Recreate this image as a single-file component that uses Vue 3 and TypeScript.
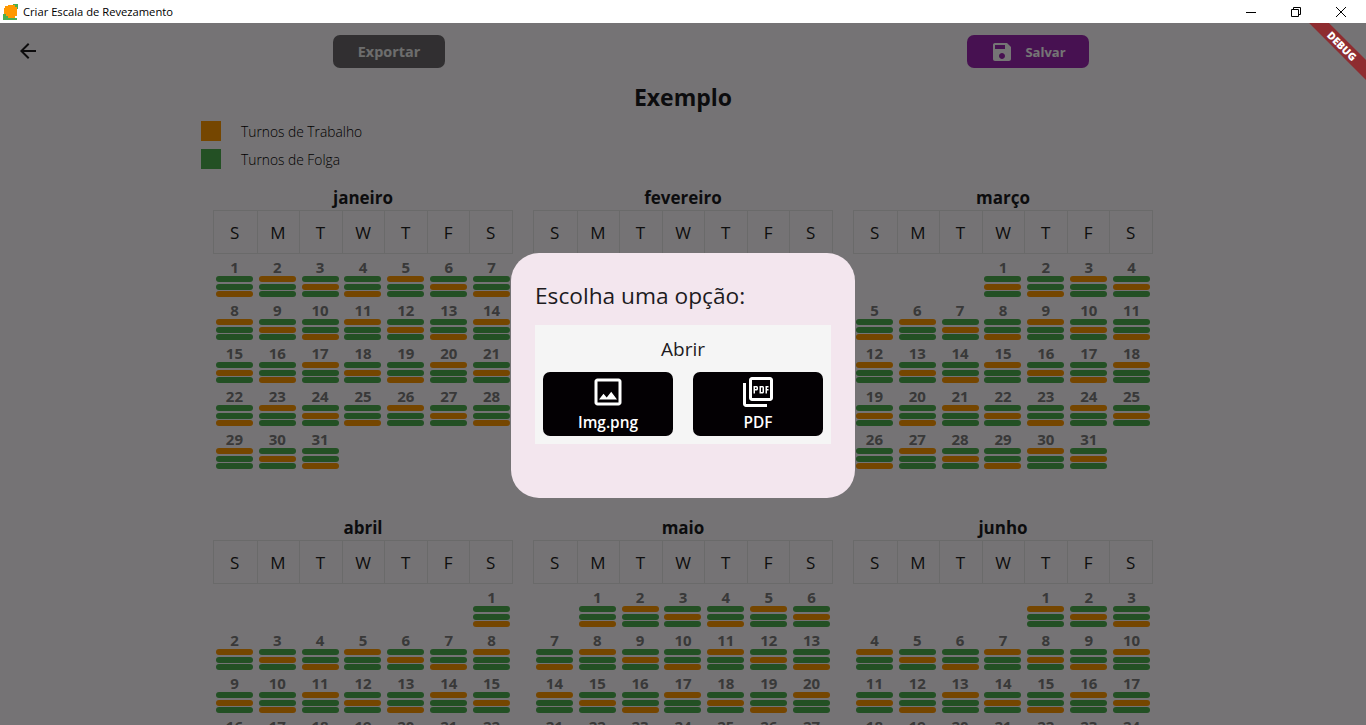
<script setup lang="ts">
interface Day {
  n: number
  shifts: string[]
}

interface Month {
  name: string
  blanks: number
  days: Day[]
}

const weekDays = ['S', 'M', 'T', 'W', 'T', 'F', 'S']
const monthNames = ['janeiro', 'fevereiro', 'março', 'abril', 'maio', 'junho']
const monthLengths = [31, 28, 31, 30, 31, 30]

// ciclo de 3 dias: folga, folga, trabalho
const cycle = [
  ['g', 'g', 'o'],
  ['o', 'g', 'g'],
  ['g', 'o', 'g'],
]

let count = 0
const months: Month[] = monthNames.map((name, m) => {
  const days: Day[] = []
  for (let d = 1; d <= monthLengths[m]; d++) {
    days.push({ n: d, shifts: cycle[count % 3] })
    count++
  }
  return { name, blanks: new Date(2023, m, 1).getDay(), days }
})
</script>

<template>
  <div class="window">
    <div class="titlebar">
      <svg class="app-icon" width="15" height="16" viewBox="0 0 15 16">
        <rect x="10" y="0" width="5" height="5" fill="#4caf50" />
        <rect x="0" y="10" width="5" height="6" fill="#4caf50" />
        <rect x="5" y="14" width="9" height="2" fill="#4caf50" />
        <path d="M2 2h3V1h7v2h2v9h-2v2H5v-2H3v-2H1V4h1z" fill="#ff9800" />
      </svg>
      <span class="app-title">Criar Escala de Revezamento</span>
      <div class="win-controls">
        <svg width="10" height="10" viewBox="0 0 10 10"><path d="M0 5.5h10" stroke="#000" fill="none" /></svg>
        <svg width="10" height="10" viewBox="0 0 10 10"><path d="M.5 2.5h7v7h-7zM2.5 2.5v-2h7v7h-2" stroke="#000" fill="none" /></svg>
        <svg width="10" height="10" viewBox="0 0 10 10"><path d="M0 0l10 10M10 0L0 10" stroke="#000" fill="none" /></svg>
      </div>
    </div>

    <main class="page">
      <header class="toolbar">
        <svg class="back" width="24" height="24" viewBox="0 0 24 24">
          <path d="M20 11H7.83l5.59-5.59L12 4l-8 8 8 8 1.41-1.41L7.83 13H20v-2z" />
        </svg>
        <button class="btn export">Exportar</button>
        <button class="btn save">
          <svg width="24" height="24" viewBox="0 0 24 24">
            <path d="M17 3H5c-1.11 0-2 .9-2 2v14c0 1.1.89 2 2 2h14c1.1 0 2-.9 2-2V7l-4-4zm-5 16c-1.66 0-3-1.34-3-3s1.34-3 3-3 3 1.34 3 3-1.34 3-3 3zm3-10H5V5h10v4z" />
          </svg>
          Salvar
        </button>
      </header>

      <h1>Exemplo</h1>

      <div class="legend">
        <div class="legend-row"><i class="swatch o"></i><span>Turnos de Trabalho</span></div>
        <div class="legend-row"><i class="swatch g"></i><span>Turnos de Folga</span></div>
      </div>

      <section class="months">
        <div v-for="month in months" :key="month.name" class="month">
          <h2>{{ month.name }}</h2>
          <div class="week">
            <span v-for="(w, i) in weekDays" :key="i">{{ w }}</span>
          </div>
          <div class="days">
            <div v-for="b in month.blanks" :key="'b' + b"></div>
            <div v-for="day in month.days" :key="day.n" class="day">
              <b>{{ day.n }}</b>
              <i v-for="(s, i) in day.shifts" :key="i" class="bar" :class="s"></i>
            </div>
          </div>
        </div>
      </section>

      <div class="overlay">
        <div class="dialog">
          <h3>Escolha uma opção:</h3>
          <div class="panel">
            <p>Abrir</p>
            <div class="options">
              <button class="option">
                <svg width="36" height="36" viewBox="0 0 24 24">
                  <path d="M19 5v14H5V5h14m0-2H5c-1.1 0-2 .9-2 2v14c0 1.1.9 2 2 2h14c1.1 0 2-.9 2-2V5c0-1.1-.9-2-2-2zm-4.86 8.86l-3 3.87L9 13.14 6 17h12l-3.86-5.14z" />
                </svg>
                Img.png
              </button>
              <button class="option">
                <svg width="36" height="36" viewBox="0 0 24 24">
                  <path d="M20 2H8c-1.1 0-2 .9-2 2v12c0 1.1.9 2 2 2h12c1.1 0 2-.9 2-2V4c0-1.1-.9-2-2-2zm0 14H8V4h12v12zM4 6H2v14c0 1.1.9 2 2 2h14v-2H4V6zm12 6V9c0-.55-.45-1-1-1h-2v5h2c.55 0 1-.45 1-1zm-2-3h1v3h-1V9zm4 2h1v-1h-1V9h1V8h-2v5h1v-2zm-8 0h1c.55 0 1-.45 1-1V9c0-.55-.45-1-1-1H9v5h1v-2zm0-2h1v1h-1V9z" />
                </svg>
                PDF
              </button>
            </div>
          </div>
        </div>
      </div>

      <div class="debug">DEBUG</div>
    </main>
  </div>
</template>

<style>
html,
body {
  margin: 0;
  overflow: hidden;
}
</style>

<style scoped>
.window {
  width: 1366px;
  height: 725px;
  display: flex;
  flex-direction: column;
  overflow: hidden;
  font-family: "Open Sans", "Noto Sans", sans-serif;
  color: #111;
}

.titlebar {
  height: 23px;
  flex: none;
  background: #fff;
  display: flex;
  align-items: center;
  padding-left: 3px;
}

.app-icon {
  margin-right: 5px;
}

.app-title {
  font-size: 11.2px;
  color: #000;
}

.win-controls {
  margin-left: auto;
  display: flex;
  gap: 35px;
  padding-right: 20px;
}

.page {
  position: relative;
  flex: 1;
  overflow: hidden;
  background: #fffbfe;
}

.toolbar {
  display: flex;
  align-items: center;
  padding: 12px 0 0 16px;
  height: 33px;
}

.back {
  fill: #1d1b1e;
  margin-bottom: 1px;
}

.btn {
  height: 33px;
  border: none;
  border-radius: 7px;
  font-family: inherit;
  font-size: 14.4px;
  font-weight: 700;
  color: #fff;
  display: flex;
  align-items: center;
  justify-content: center;
  padding: 0;
}

.export {
  width: 112px;
  margin-left: 293px;
  background: #6b686c;
  color: #eee;
}

.save {
  width: 122px;
  margin-left: 522px;
  background: #9c27b0;
  gap: 11px;
  font-size: 13px;
}

.save svg {
  fill: #fff;
}

h1 {
  margin: 13px 0 0;
  font-size: 23px;
  line-height: 32px;
  font-weight: 700;
  text-align: center;
  color: #1c1b1f;
}

.legend {
  margin: 8px 0 0 201px;
  display: flex;
  flex-direction: column;
  gap: 8px;
}

.legend-row {
  display: flex;
  align-items: center;
  gap: 20px;
  height: 20px;
  font-size: 13.8px;
  font-weight: 300;
  color: #000;
}

.swatch {
  width: 20px;
  height: 20px;
}

.swatch.o,
.bar.o {
  background: #ff9800;
}

.swatch.g,
.bar.g {
  background: #4caf50;
}

.months {
  margin: 17px 0 0 213px;
  display: grid;
  grid-template-columns: repeat(3, 300px);
  column-gap: 20px;
}

.month {
  height: 330px;
}

h2 {
  margin: 0;
  height: 24px;
  font-size: 17px;
  line-height: 24px;
  font-weight: 700;
  text-align: center;
  color: #1c1b1f;
}

.week {
  display: grid;
  grid-template-columns: repeat(7, 1fr);
  height: 44px;
  box-sizing: border-box;
  border: 1px solid #e6e6e6;
}

.week span {
  display: flex;
  align-items: center;
  justify-content: center;
  padding: 1px 1px 0 0;
  font-size: 17px;
  font-weight: 400;
  color: #222;
  border-left: 1px solid #e6e6e6;
}

.week span:first-child {
  border-left: none;
}

.days {
  display: grid;
  grid-template-columns: repeat(7, 1fr);
  grid-auto-rows: 43px;
}

.day {
  display: flex;
  flex-direction: column;
  align-items: center;
  padding-top: 4px;
  box-sizing: border-box;
}

.day b {
  height: 18px;
  font-size: 15px;
  line-height: 18px;
  font-weight: 700;
  color: #7c7c7c;
}

.bar {
  width: 37px;
  height: 6px;
  flex: none;
  margin-bottom: 1.5px;
  border-radius: 3px;
}

.overlay {
  position: absolute;
  inset: 0;
  display: flex;
  align-items: center;
  justify-content: center;
  padding-top: 3px;
  box-sizing: border-box;
  background: rgba(0, 0, 0, 0.54);
}

.dialog {
  width: 344px;
  height: 245px;
  box-sizing: border-box;
  padding: 24px;
  border-radius: 28px;
  background: #f3e6ee;
}

h3 {
  margin: 0 0 13px;
  height: 35px;
  font-size: 22.7px;
  line-height: 38px;
  font-weight: 400;
  color: #1d1b1e;
}

.panel {
  height: 119px;
  box-sizing: border-box;
  padding: 8px;
  background: #f5f5f5;
}

.panel p {
  margin: 0 0 9px;
  height: 30px;
  font-size: 19px;
  line-height: 33px;
  font-weight: 400;
  text-align: center;
  color: #1d1b1e;
}

.options {
  display: flex;
  justify-content: space-between;
}

.option {
  width: 130px;
  height: 64px;
  border: none;
  border-radius: 7px;
  background: #030003;
  color: #fff;
  font-family: inherit;
  font-size: 15.4px;
  font-weight: 600;
  display: flex;
  flex-direction: column;
  align-items: center;
  padding: 2px 0 0;
  line-height: 24px;
}

.option svg {
  fill: #fff;
  margin-bottom: 1px;
}

.debug {
  position: absolute;
  left: 1282px;
  top: 16px;
  width: 120px;
  height: 14px;
  transform: rotate(45deg);
  background: #8e2c30;
  color: #fff;
  font-size: 10.5px;
  font-weight: 800;
  line-height: 14px;
  text-align: center;
}
</style>
